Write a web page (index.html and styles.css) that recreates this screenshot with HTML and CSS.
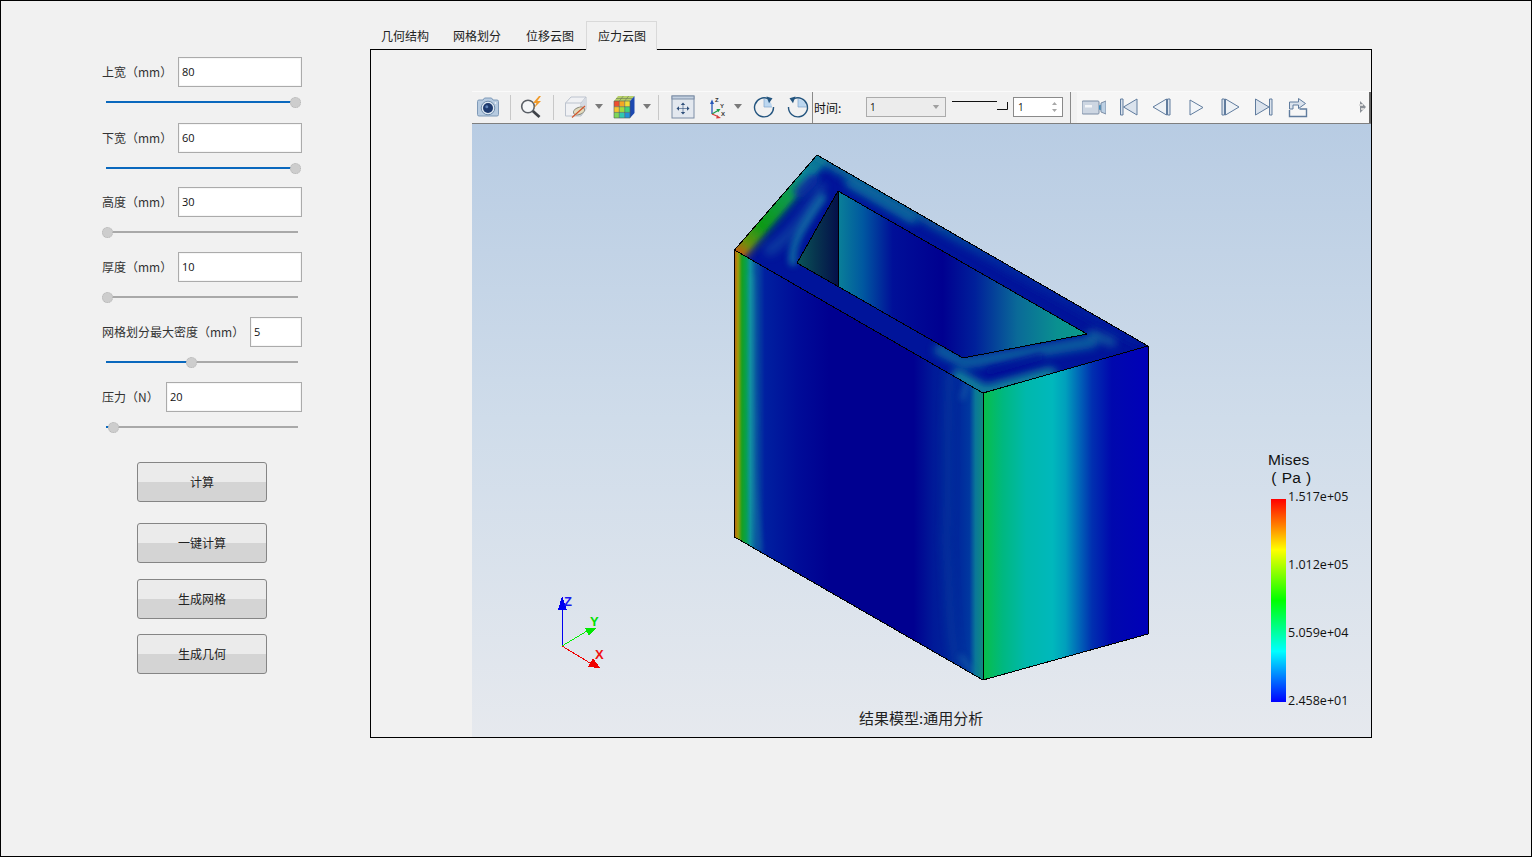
FILE: index.html
```html
<!DOCTYPE html>
<html lang="zh-CN">
<head>
<meta charset="utf-8">
<title>应力云图</title>
<link rel="stylesheet" href="styles.css">
</head>
<body>
<div class="app">
  <aside class="panel">
    <div class="field">
      <div class="row"><label class="lbl">上宽（mm）</label><input class="num w124" value="80"></div>
      <div class="slider" style="--v:189px"><i class="fill"></i><i class="knob"></i></div>
    </div>
    <div class="field">
      <div class="row"><label class="lbl">下宽（mm）</label><input class="num w124" value="60"></div>
      <div class="slider" style="--v:189px"><i class="fill"></i><i class="knob"></i></div>
    </div>
    <div class="field">
      <div class="row"><label class="lbl">高度（mm）</label><input class="num w124" value="30"></div>
      <div class="slider" style="--v:1px"><i class="fill"></i><i class="knob"></i></div>
    </div>
    <div class="field">
      <div class="row"><label class="lbl">厚度（mm）</label><input class="num w124" value="10"></div>
      <div class="slider" style="--v:1px"><i class="fill"></i><i class="knob"></i></div>
    </div>
    <div class="field">
      <div class="row"><label class="lbl">网格划分最大密度（mm）</label><input class="num w52" value="5"></div>
      <div class="slider" style="--v:85px"><i class="fill"></i><i class="knob"></i></div>
    </div>
    <div class="field">
      <div class="row"><label class="lbl">压力（N）</label><input class="num w136" value="20"></div>
      <div class="slider" style="--v:7px"><i class="fill"></i><i class="knob"></i></div>
    </div>
    <div class="actions">
      <button class="btn">计算</button>
      <button class="btn">一键计算</button>
      <button class="btn">生成网格</button>
      <button class="btn">生成几何</button>
    </div>
  </aside>

  <main class="main">
    <nav class="tabs">
      <span class="tab">几何结构</span>
      <span class="tab">网格划分</span>
      <span class="tab">位移云图</span>
      <span class="tab active">应力云图</span>
    </nav>
    <section class="frame">
      <div class="viewer">
        <div class="toolbar">
          <div class="tools">
            <svg class="ico" viewBox="0 0 24 24"><path d="M1.500 6.500A1.500 1.500 0 0 1 3 5h4l1.500-2h7L17 5h4a1.500 1.500 0 0 1 1.500 1.500v13A1.500 1.500 0 0 1 21 21H3a1.500 1.500 0 0 1-1.500-1.500z" fill="#b7cbe0" stroke="#7f9ab8"/><circle cx="12" cy="13" r="6.800" fill="#dfe9f3" stroke="#6f8cab"/><circle cx="12" cy="13" r="5" fill="#1d3a6e"/><circle cx="10.800" cy="11.800" r="1.500" fill="#5f82b5"/><circle cx="19.500" cy="8" r=".8" fill="#fff"/></svg>
            <i class="sep"></i>
            <svg class="ico" viewBox="0 0 24 24"><circle cx="9" cy="11.500" r="6.300" fill="#f4f6f8" stroke="#5a5f66" stroke-width="1.600"/><path d="M13.800 16L20.500 22" stroke="#3e4248" stroke-width="2.800"/><path d="M20 1l-6 7h3.500L15 13l7-7h-3.700L22 1z" fill="#f09a2a"/></svg>
            <i class="sep"></i>
            <svg class="ico" viewBox="0 0 24 24"><path d="M1.500 8L7 2h15v12l-5 7H1.500z" fill="#f0f1f4" stroke="#bcc3ce"/><path d="M1.500 8H17v13M17 8l5-6" fill="none" stroke="#bcc3ce"/><path d="M17.500 8l4.500-5.500V14l-4.500 6.500z" fill="#d5dae2"/><ellipse cx="15" cy="16" rx="5.800" ry="3.600" fill="#e3dbbd" stroke="#8d8d80" transform="rotate(-22 15 16)"/><path d="M8 22.500L21 11" stroke="#d2552c" stroke-width="1.200"/></svg>
            <svg class="drop" viewBox="0 0 8 5"><path d="M0 0h8L4 5z" fill="#7a7a7a"/></svg>
            <svg class="ico" viewBox="0 0 24 24"><path d="M2 6l4-5h16.500L18 6z" fill="#b6cf6a"/><path d="M7.300 6l4-5M12.700 6l4-5M4 3.500h16.500" stroke="#6b7a55" stroke-width=".6" fill="none"/><rect x="2" y="6" width="5.300" height="5.700" fill="#f04f2f"/><rect x="7.300" y="6" width="5.400" height="5.700" fill="#f5a623"/><rect x="12.700" y="6" width="5.300" height="5.700" fill="#f2dc36"/><rect x="2" y="11.700" width="5.300" height="5.700" fill="#f7c531"/><rect x="7.300" y="11.700" width="5.400" height="5.700" fill="#9fdc3e"/><rect x="12.700" y="11.700" width="5.300" height="5.700" fill="#3fd27c"/><rect x="2" y="17.400" width="5.300" height="5.600" fill="#7fd85a"/><rect x="7.300" y="17.400" width="5.400" height="5.600" fill="#30c9b0"/><rect x="12.700" y="17.400" width="5.300" height="5.600" fill="#2490d8"/><path d="M18 6l4.500-5v17L18 23z" fill="#1c48b0"/><path d="M2 6h16v17H2zM7.300 6v17M12.700 6v17M2 11.700h16M2 17.400h16" fill="none" stroke="#4f5f58" stroke-width=".6"/></svg>
            <svg class="drop" viewBox="0 0 8 5"><path d="M0 0h8L4 5z" fill="#7a7a7a"/></svg>
            <i class="sep"></i>
            <svg class="ico" viewBox="0 0 24 24"><rect x="1" y="1" width="22" height="22" fill="#e3e8ef" stroke="#7d8ea6"/><rect x="1" y="1" width="22" height="3" fill="#c3d0e0" stroke="#7d8ea6"/><path d="M12 7.500L9.800 10h4.400zM12 19.500L9.800 17h4.400zM5.500 13.500L8 11.300v4.400zM18.500 13.500L16 11.300v4.400z" fill="#2f4f7a"/><path d="M12 10v7M8 13.500h8" stroke="#2f4f7a" stroke-width=".6"/></svg>
            <svg class="ico" viewBox="0 0 24 24"><path d="M7 19V8" stroke="#2456b8" stroke-width="1.300"/><path d="M7 4.500L5 9h4z" fill="#2456b8"/><path d="M7 19l6-3.500" stroke="#1f9c4a" stroke-width="1.300"/><path d="M15.500 14l-4.200-.1 2 3.300z" fill="#1f9c4a"/><path d="M7 19l6 2.500" stroke="#d83a3a" stroke-width="1.300"/><path d="M16 23l-4-2.800-.8 3.300z" fill="#d83a3a"/><text x="10" y="7" class="axis-t">Z</text><text x="15" y="13" class="axis-t">Y</text><text x="16" y="21" class="axis-t">X</text></svg>
            <svg class="drop" viewBox="0 0 8 5"><path d="M0 0h8L4 5z" fill="#7a7a7a"/></svg>
            <svg class="ico" viewBox="0 0 24 24"><path d="M12 12V4a8 8 0 0 1 8 8z" fill="#bcd7f0"/><path d="M12 12h8M12 12V3.500" stroke="#7ea5cc" stroke-width=".7"/><path d="M16.500 4A9.500 9.500 0 1 0 21.500 12" fill="none" stroke="#24557f" stroke-width="1.400"/><path d="M14.500 1.500l6 1.800-3.500 5z" fill="#24557f"/></svg>
            <svg class="ico" viewBox="0 0 24 24"><path d="M12 12h8a8 8 0 0 0-8-8z" fill="#bcd7f0"/><path d="M12 12h8M12 12V3.500" stroke="#7ea5cc" stroke-width=".7"/><path d="M2.500 12A9.500 9.500 0 1 0 7.500 4" fill="none" stroke="#24557f" stroke-width="1.400"/><path d="M9.500 1.500l-6 1.800 3.500 5z" fill="#24557f"/></svg>
            <i class="sep"></i>
          </div>
          <span class="time-lbl">时间:</span>
          <div class="combo"><span>1</span><svg class="tiny" viewBox="0 0 8 5"><path d="M0 0h8L4 5z" fill="#a0a0a0"/></svg></div>
          <svg class="timeline" viewBox="0 0 56 12"><path d="M0 .5h45" stroke="#111"/><path d="M45 8.500h10.500V1" fill="none" stroke="#111"/></svg>
          <div class="spin"><span>1</span><svg class="spin-a" viewBox="0 0 5 10"><path d="M2.500 0L5 3H0zM2.500 10L0 7h5z" fill="#a8a8a8"/></svg></div>
          <i class="sep long"></i>
          <div class="player">
            <svg class="ico" viewBox="0 0 24 24"><rect x="0" y="6" width="17" height="13" rx="1" fill="#cdd6e2" stroke="#7d8ea6"/><rect x="3" y="10" width="7" height="2.500" fill="#f4f6f9"/><path d="M17 10.500l2-1v6l-2-1z" fill="#3f8fc0"/><path d="M19 8l5-2v13l-5-2z" fill="#bcd0e4" stroke="#7d8ea6"/></svg>
            <svg class="ico" viewBox="0 0 24 24"><path d="M4.500 4v16h2.500V4z" fill="#dbe3ed" stroke="#607c9e"/><path d="M21 4v16L7.500 12z" fill="#dbe3ed" stroke="#607c9e"/></svg>
            <svg class="ico" viewBox="0 0 24 24"><path d="M16.500 4v16L3 12z" fill="#eef2f6" stroke="#607c9e"/><path d="M17.500 4v16h2.500V4z" fill="#dbe3ed" stroke="#607c9e"/></svg>
            <svg class="ico" viewBox="0 0 24 24"><path d="M6 5v15l13-7.500z" fill="#f2f5f8" stroke="#607c9e"/></svg>
            <svg class="ico" viewBox="0 0 24 24"><path d="M4 4v16h2.500V4z" fill="#dbe3ed" stroke="#607c9e"/><path d="M7.500 4v16L21 12z" fill="#eef2f6" stroke="#607c9e"/></svg>
            <svg class="ico" viewBox="0 0 24 24"><path d="M3.500 4v16L17 12z" fill="#dbe3ed" stroke="#607c9e"/><path d="M17.500 4v16H20V4z" fill="#dbe3ed" stroke="#607c9e"/></svg>
            <svg class="ico" viewBox="0 0 24 24"><path d="M3.500 15v6.500h17V14h-7" fill="none" stroke="#607c9e" stroke-width="1.400"/><path d="M3.500 14V7h9V3.500l7 5-7 5V10H7v4z" fill="#dbe3ed" stroke="#607c9e"/></svg>
            <svg class="grip" viewBox="0 0 8 16"><path d="M1 2l6 6-6 6z" fill="#8a8f96"/><path d="M0 5h4v2H0zM2 9h3v2H2z" fill="#d8d8d8"/></svg>
          </div>
        </div>
        <div class="canvas">
          <svg class="scene" viewBox="472 124 899 613">
            <defs>
              <linearGradient id="gL" gradientUnits="userSpaceOnUse" x1="735" y1="0" x2="983" y2="0">
                <stop offset="0" stop-color="#b86a10"/><stop offset=".012" stop-color="#a09a08"/><stop offset=".028" stop-color="#18a020"/>
                <stop offset=".045" stop-color="#08a050"/><stop offset=".062" stop-color="#1090a0"/><stop offset=".085" stop-color="#0850a0"/>
                <stop offset=".12" stop-color="#0020a0"/><stop offset=".25" stop-color="#000c98"/><stop offset=".38" stop-color="#000090"/>
                <stop offset=".72" stop-color="#000090"/><stop offset=".8" stop-color="#001a98"/><stop offset=".9" stop-color="#00289c"/>
                <stop offset=".945" stop-color="#0038a0"/><stop offset=".97" stop-color="#0a7898"/><stop offset="1" stop-color="#108a80"/>
              </linearGradient>
              <linearGradient id="gR" gradientUnits="userSpaceOnUse" x1="983" y1="0" x2="1148" y2="0">
                <stop offset="0" stop-color="#08bf48"/><stop offset=".12" stop-color="#00b880"/><stop offset=".26" stop-color="#00b8ac"/>
                <stop offset=".42" stop-color="#00b8bc"/><stop offset=".5" stop-color="#00a0bc"/><stop offset=".58" stop-color="#0068b8"/>
                <stop offset=".66" stop-color="#0030b0"/><stop offset=".78" stop-color="#0008ae"/><stop offset="1" stop-color="#0000b8"/>
              </linearGradient>
              <linearGradient id="gW" gradientUnits="userSpaceOnUse" x1="838" y1="0" x2="1087" y2="0">
                <stop offset="0" stop-color="#0a8098"/><stop offset=".1" stop-color="#0058a0"/><stop offset=".22" stop-color="#000f98"/>
                <stop offset=".42" stop-color="#000090"/><stop offset=".55" stop-color="#00209a"/><stop offset=".72" stop-color="#0a6a98"/>
                <stop offset=".88" stop-color="#0a9090"/><stop offset="1" stop-color="#0a9a88"/>
              </linearGradient>
              <linearGradient id="gT" gradientUnits="userSpaceOnUse" x1="797" y1="0" x2="838" y2="0">
                <stop offset="0" stop-color="#0a5558"/><stop offset=".45" stop-color="#07354f"/><stop offset="1" stop-color="#04104a"/>
              </linearGradient>
              <linearGradient id="gE" gradientUnits="userSpaceOnUse" x1="735" y1="250" x2="817" y2="155">
                <stop offset="0" stop-color="#c05a10"/><stop offset=".1" stop-color="#6a9010"/><stop offset=".28" stop-color="#0c9a14"/>
                <stop offset=".62" stop-color="#0a9a50"/><stop offset=".82" stop-color="#0c8a98"/><stop offset="1" stop-color="#0a6a98"/>
              </linearGradient>
              <linearGradient id="gF" gradientUnits="userSpaceOnUse" x1="817" y1="155" x2="1148" y2="346">
                <stop offset="0" stop-color="#0a7f98"/><stop offset=".3" stop-color="#0a6a98"/><stop offset=".55" stop-color="#0030a0"/><stop offset="1" stop-color="#00189c"/>
              </linearGradient>
              <filter id="b4" filterUnits="userSpaceOnUse" x="472" y="124" width="899" height="613"><feGaussianBlur stdDeviation="4"/></filter>
              <filter id="b3" filterUnits="userSpaceOnUse" x="472" y="124" width="899" height="613"><feGaussianBlur stdDeviation="3"/></filter>
              <filter id="b2" filterUnits="userSpaceOnUse" x="472" y="124" width="899" height="613"><feGaussianBlur stdDeviation="2"/></filter>
              <clipPath id="cT"><path d="M734.500 250L817 155L1148 346L983 393zM797 263L963 358L1087 334L838 191z" clip-rule="evenodd"/></clipPath>
              <clipPath id="cL"><path d="M734.500 250L983 393V680L734.500 537z"/></clipPath>
            </defs>

            <path class="crisp" d="M734.500 250L983 393V680L734.500 537z" fill="url(#gL)"/>
            <g clip-path="url(#cL)" fill="none">
              <path d="M751 275C754 330 749 370 753 420C750 470 755 510 760 552" stroke="#20a0a8" stroke-width="4" opacity=".35" filter="url(#b3)"/>
              <path d="M950 370C945 430 950 480 946 540C950 590 948 630 958 670" stroke="#0a58a0" stroke-width="8" opacity=".3" filter="url(#b4)"/>
              <path d="M970 372L962 400M960 655L972 672" stroke="#2a8ab0" stroke-width="4" opacity=".45" filter="url(#b3)"/>
            </g>
            <path class="crisp" d="M983 393L1148 346V634L983 680z" fill="url(#gR)"/>

            <path class="crisp" d="M838 191L1087 334L963 358L838 286z" fill="url(#gW)"/>
            <path class="crisp" d="M797 263L838 191V286z" fill="url(#gT)"/>

            <path class="crisp" d="M734.500 250L817 155L1148 346L983 393zM797 263L963 358L1087 334L838 191z" fill="#00149a" fill-rule="evenodd"/>
            <g clip-path="url(#cT)" fill="none" stroke-linecap="round">
              <path d="M729 246L811 151" stroke="url(#gE)" stroke-width="40" opacity=".85" filter="url(#b4)"/>
              <path d="M735 250L817 155" stroke="url(#gE)" stroke-width="20" filter="url(#b2)"/>
              <path d="M817 155L1148 346" stroke="url(#gF)" stroke-width="12" opacity=".85" filter="url(#b4)"/>
              <path d="M850 183L912 219" stroke="#0a80a0" stroke-width="10" opacity=".75" filter="url(#b4)"/>
              <path d="M793 262C790 245 805 222 822 198" stroke="#159ca8" stroke-width="8" opacity=".6" filter="url(#b3)"/>
              <path d="M770 250C790 236 808 214 820 188" stroke="#1a70a8" stroke-width="12" opacity=".4" filter="url(#b4)"/>
              <path d="M940 350L965 363L1092 342" stroke="#0c78a0" stroke-width="12" opacity=".75" filter="url(#b4)"/>
              <path d="M1092 334L1112 342" stroke="#1a84a4" stroke-width="9" opacity=".6" filter="url(#b4)"/>
              <path d="M958 376L985 392L1050 374" stroke="#12a09c" stroke-width="13" opacity=".8" filter="url(#b4)"/>
              <path d="M990 371L1040 357" stroke="#000f98" stroke-width="7" opacity=".8" filter="url(#b3)"/>
              <path d="M800 192L812 180" stroke="#0a2aa0" stroke-width="12" opacity=".8" filter="url(#b3)"/>
            </g>

            <g class="edges">
              <path d="M734.500 250L817 155L1148 346V634L983 680L734.500 537zM734.500 250L983 393L1148 346M983 393V680"/>
              <path d="M797 263L838 191L1087 334L963 358zM838 191V286"/>
            </g>

            <g class="triad">
              <path d="M562 646V610" stroke="#0000f0"/>
              <path d="M562 596L558 610H567z" fill="#0000f0"/>
              <path d="M562 646L587 631" stroke="#00f000"/>
              <path d="M596 628L585 628L589 636z" fill="#00e800"/>
              <path d="M562 646L590 663" stroke="#f00000"/>
              <path d="M600 668L593 658L588 667z" fill="#f00000"/>
              <text x="564" y="606" class="t-z">Z</text>
              <text x="590" y="626" class="t-y">Y</text>
              <text x="595" y="659" class="t-x">X</text>
            </g>
          </svg>

          <div class="legend">
            <div class="l-title">Mises<br>&#8201;( Pa )</div>
            <div class="l-bar"></div>
            <span class="l-val v1">1.517e+05</span>
            <span class="l-val v2">1.012e+05</span>
            <span class="l-val v3">5.059e+04</span>
            <span class="l-val v4">2.458e+01</span>
          </div>
          <div class="caption">结果模型:通用分析</div>
        </div>
      </div>
    </section>
  </main>
</div>
</body>
</html>
```

FILE: styles.css
```css
* { box-sizing: border-box; }
html, body { margin: 0; padding: 0; }
body { width: 1532px; height: 857px; overflow: hidden; background: #f1f1f1; font-family: "Noto Sans CJK SC", "Noto Sans", sans-serif; }

.app { display: flex; width: 1532px; height: 857px; border: 1px solid #000; background: #f1f1f1; }

/* left panel */
.panel { width: 369px; flex: none; padding: 56px 0 0 100px; }
.field { width: 201px; margin-bottom: 19px; }
.field:nth-child(1) { margin-bottom: 20px; }
.field:nth-child(2) { margin-bottom: 18px; }
.field:nth-child(6) { margin-bottom: 34px; }
.row { display: flex; align-items: center; justify-content: space-between; height: 30px; }
.lbl { padding: 0 0 2px 1px; font-size: 12px; color: #333; white-space: nowrap; }
.num { height: 30px; padding: 0 3px 2px; border: 1px solid #ababab; background: #fff; box-shadow: inset 0 0 0 1px #f6f6f6; font: 11px "Open Sans", sans-serif; color: #111; outline: none; }
.w124 { width: 124px; }
.w52 { width: 52px; }
.w136 { width: 136px; }
.slider { position: relative; width: 192px; height: 2px; margin: 14px 0 0 5px; background: #a9a9a9; }
.fill { position: absolute; left: 0; top: 0; height: 2px; width: var(--v); background: #0a68bd; }
.knob { position: absolute; top: -4.500px; left: calc(var(--v) - 5.500px); width: 11px; height: 11px; border-radius: 50%; background: #cdcdcd; border: 1px dotted #b5b5b5; }

.actions { display: flex; flex-direction: column; gap: 16px; margin-left: 36px; }
.btn { width: 130px; height: 40px; padding: 0 0 2px; border: 1px solid #858585; border-radius: 3px; background: linear-gradient(#ebebeb 50%, #d4d4d4 50%); font: 12px "Noto Sans CJK SC", sans-serif; color: #222; }
.btn:nth-child(1) { margin-bottom: 5px; }
.btn:nth-child(3) { margin-bottom: -1px; }

/* main */
.main { display: flex; flex-direction: column; width: 1002px; padding-top: 20px; }
.tabs { display: flex; height: 28px; margin-left: -1px; position: relative; z-index: 1; }
.tab { height: 28px; padding: 0 12px; font-size: 12px; line-height: 29px; color: #222; white-space: nowrap; }
.tab:nth-child(2) { padding-right: 13px; }
.tab.active { height: 29px; padding: 0 10px 0 11px; background: #f1f1f1; border: 1px solid #d9d9d9; border-bottom: 0; line-height: 28px; }
.frame { width: 1002px; height: 689px; padding: 41px 0 0 101px; border: 1px solid #000; }
.viewer { width: 899px; height: 646px; display: flex; flex-direction: column; }

/* toolbar */
.toolbar { display: flex; align-items: center; height: 33px; flex: none; background: #f1f1f1; border-top: 1px solid #fafafa; border-bottom: 1px solid #7f7f7f; }
.tools { display: grid; grid-template-columns: 32px 12px 30px 15px 30px 15px 36px 10px 13px 35px 34px 8px 44px 24px 5px; align-items: center; justify-items: center; width: 343px; height: 31px; flex: none; }
.ico { display: block; width: 24px; height: 24px; margin-bottom: 2px; }
.drop { display: block; width: 8px; height: 5px; margin-bottom: 2px; }
.sep { display: block; width: 1px; height: 25px; background: #c8c8c8; }
.tools > .sep:last-child { height: 31px; background: #8a8a8a; }
.axis-t { font: bold 6px "Liberation Sans", sans-serif; fill: #333; }
.time-lbl { width: 51px; margin-left: -1px; flex: none; font-size: 12px; color: #111; padding-bottom: 1px; }
.combo { display: flex; align-items: center; justify-content: space-between; width: 80px; height: 20px; margin: 0 0 2px 1px; padding: 0 5px 0 3px; flex: none; background: #ececec; border: 1px solid #ababab; font: 10px "Open Sans", sans-serif; color: #111; }
.tiny { width: 8px; height: 4px; }
.timeline { width: 56px; height: 12px; margin: -2px 5px 0 6px; flex: none; }
.spin { display: flex; align-items: center; justify-content: space-between; width: 50px; height: 20px; margin-bottom: 2px; padding: 0 5px 0 4px; flex: none; background: #fff; border: 1px solid #8a8a8a; font: 10px "Open Sans", sans-serif; color: #111; }
.spin-a { width: 5px; height: 10px; }
.sep.long { height: 31px; margin: 0 0 0 7px; flex: none; background: #8a8a8a; }
.player { display: grid; grid-template-columns: repeat(7, 34px) 1fr 2px; align-items: center; justify-items: center; margin-left: 6px; flex: 1; height: 31px; background: #f6f6f6; border-right: 2px solid #666; }
.grip { width: 8px; height: 16px; justify-self: end; margin-bottom: 2px; }

/* canvas */
.canvas { position: relative; flex: 1; background: linear-gradient(#b8cce3, #cfdcea 48%, #e6e9ee); }
.scene { display: block; width: 899px; height: 613px; }
.crisp { shape-rendering: crispEdges; }
.edges path { fill: none; stroke: #000; stroke-width: 1; shape-rendering: crispEdges; }
.triad path { stroke-width: 1; shape-rendering: crispEdges; }
.t-z, .t-y, .t-x { font: bold 13px "Liberation Sans", sans-serif; }
.t-z { fill: #1a1af0; }
.t-y { fill: #00e000; }
.t-x { fill: #f01010; }

.legend { position: absolute; left: 0; top: 0; }
.l-title { position: absolute; left: 796px; top: 327px; font: 15.500px/18px "Liberation Sans", sans-serif; letter-spacing: .2px; word-spacing: .5px; color: #111; white-space: pre; }
.l-bar { position: absolute; left: 799px; top: 375px; width: 15px; height: 203px; background: linear-gradient(#ff0000, #ff8000 13%, #ffff00 25%, #00ff00 50%, #00ffff 75%, #0000ff); }
.l-val { position: absolute; left: 816px; font: 12.500px/14px "Open Sans", sans-serif; color: #111; white-space: nowrap; }
.v1 { top: 366px; }
.v2 { top: 434px; }
.v3 { top: 502px; }
.v4 { top: 570px; }
.caption { position: absolute; left: 387px; top: 584px; font-size: 15px; line-height: 20px; color: #222; white-space: nowrap; }
```
